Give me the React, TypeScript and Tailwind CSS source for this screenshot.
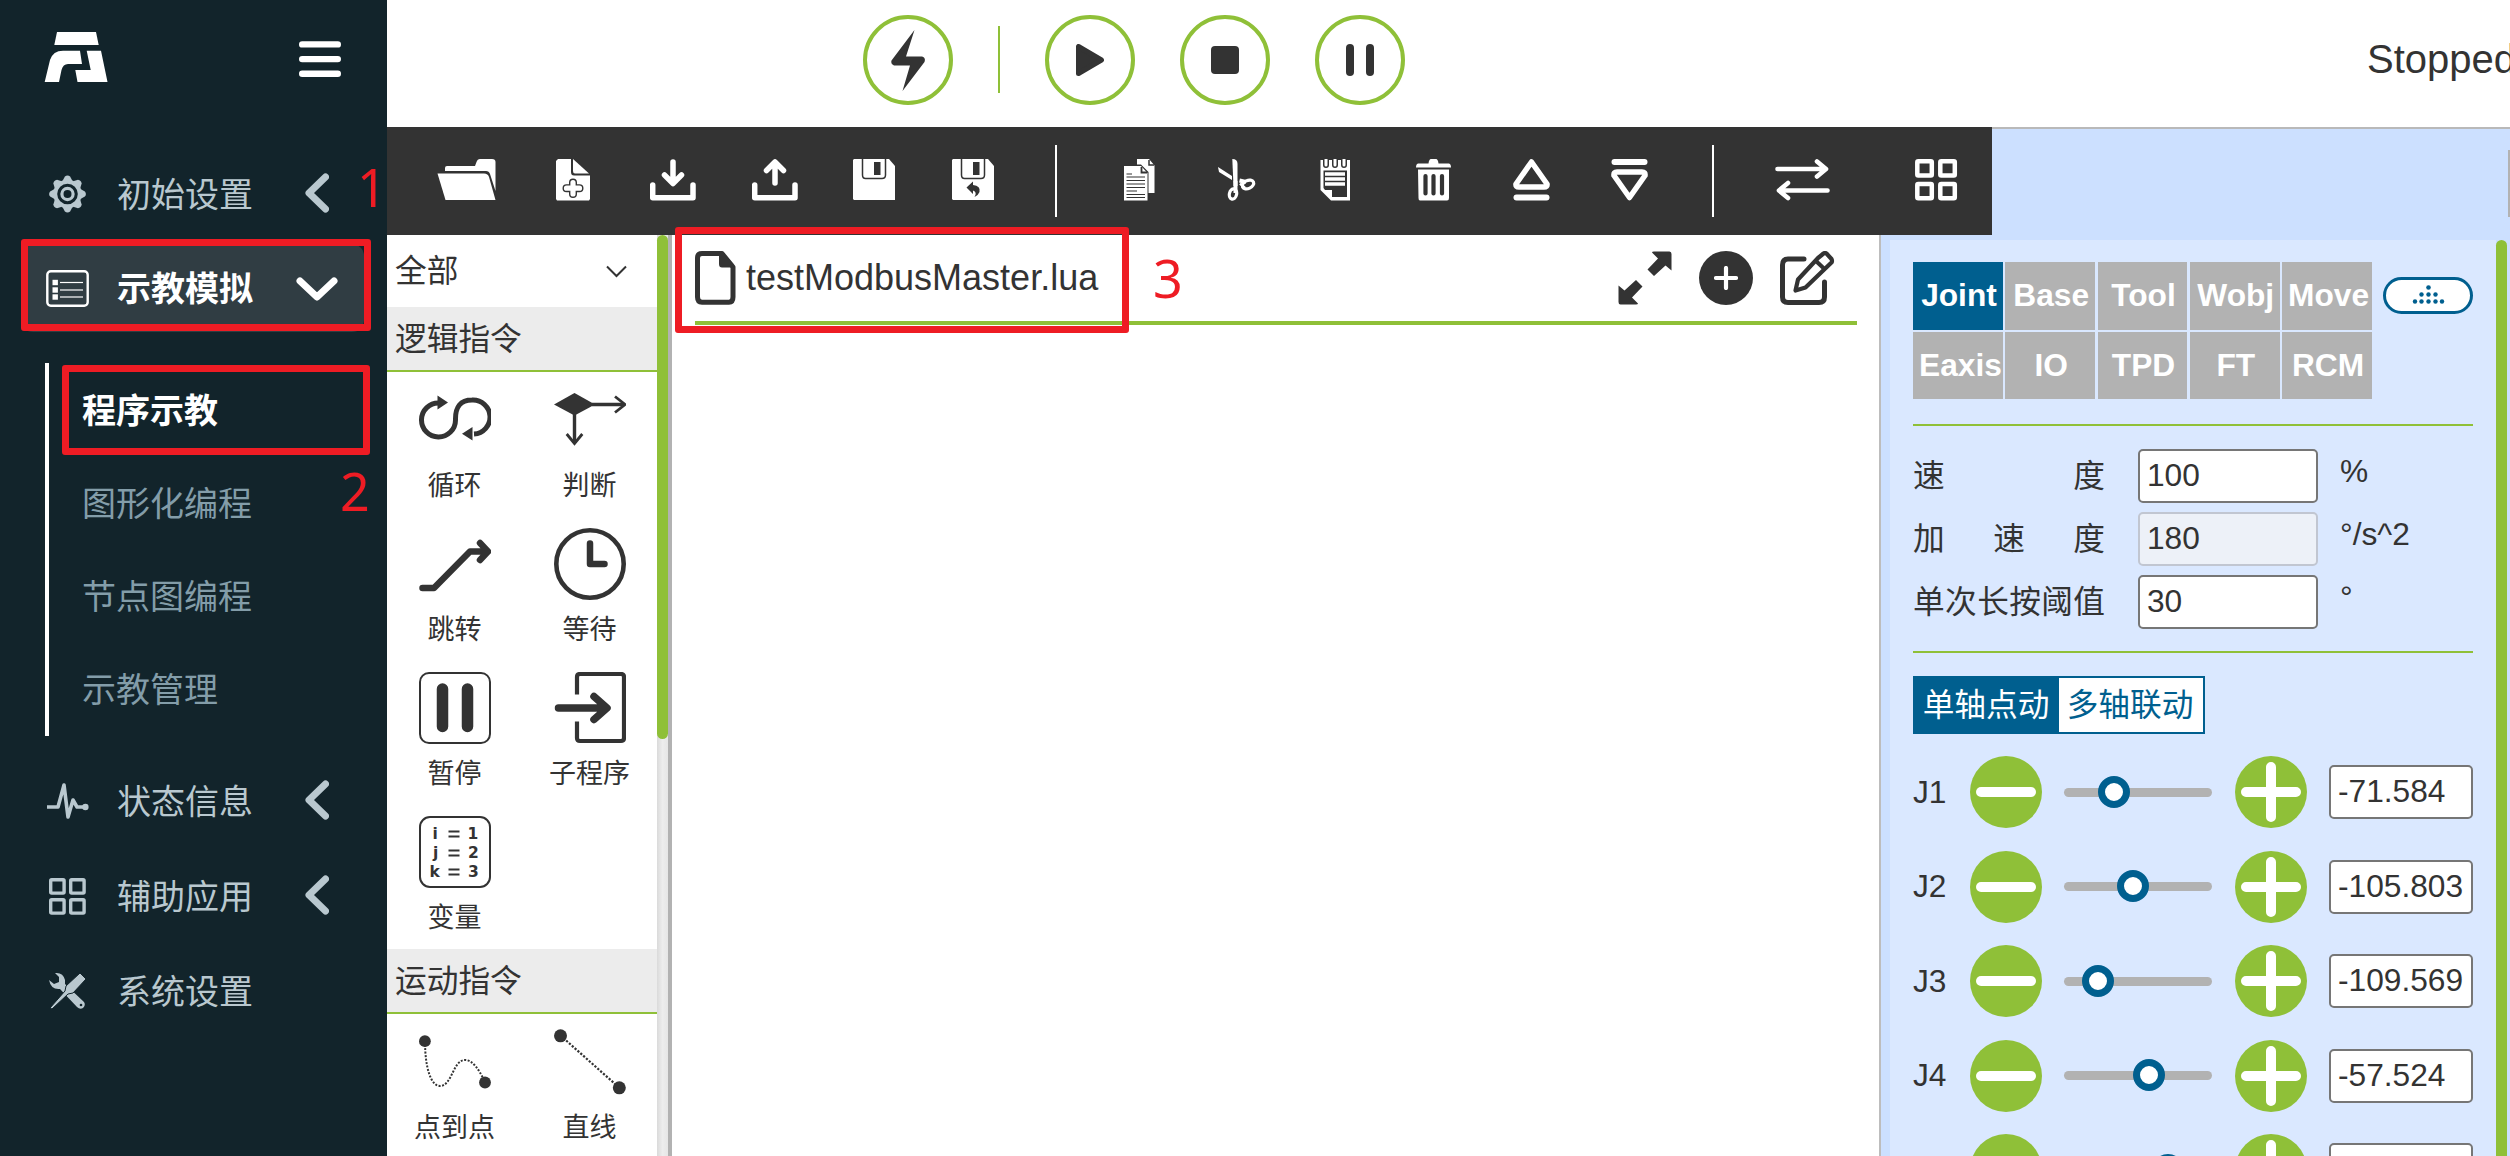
import React from "react";

type Kids = { children: React.ReactNode };

function Svg({ w, h, className = "", children }: { w: number; h: number; className?: string } & Kids) {
  return (
    <svg width={w} height={h} viewBox={`0 0 ${w} ${h}`} fill="none" className={`block shrink-0 ${className}`}>
      {children}
    </svg>
  );
}

/* ---------- Sidebar ---------- */

const Logo = () => (
  <Svg w={64} h={50} className="text-white">
    <g fill="currentColor">
      <path d="M13 0H52L54.7 13H10.3Z" />
      <path d="M.7 50L6 28Q9 18.7 19 18.7H36L38 32H24Q19 32 17.5 38L15 50Z" />
      <path d="M42.7 18.7H57L63.5 50H33.5L31.3 38H46.7Z" />
    </g>
  </Svg>
);

const GearIcon = () => (
  <Svg w={43} h={38}>
    <g transform="translate(21.5 19)">
      {[0, 45, 90, 135, 180, 225, 270, 315].map((a) => (
        <path key={a} transform={`rotate(${a})`} d="M-5 -13L-2.6 -17.4Q0 -19.4 2.6 -17.4L5 -13Z" fill="currentColor" />
      ))}
      <circle r="12.3" stroke="currentColor" strokeWidth="4" />
      <circle r="5.6" stroke="currentColor" strokeWidth="3.2" />
    </g>
  </Svg>
);

const ListIcon = () => (
  <Svg w={43} h={37}>
    <rect x="1.3" y="1.3" width="40.4" height="34.4" rx="3.5" stroke="currentColor" strokeWidth="2.4" />
    {[12.5, 20, 27].map((y) => (
      <g key={y}>
        <rect x="6.5" y={y - 2.7} width="5.4" height="5.4" fill="currentColor" />
        <path d={`M14 ${y}H37`} stroke="currentColor" strokeWidth="1.2" />
      </g>
    ))}
  </Svg>
);

const PulseIcon = () => (
  <Svg w={43} h={38}>
    <path d="M1 25H12L18 3L22 35L27 18L31 25H38" stroke="currentColor" strokeWidth="3.6" strokeLinejoin="round" />
    <circle cx="39.4" cy="25" r="3.2" fill="currentColor" />
  </Svg>
);

const GridIcon = () => (
  <Svg w={43} h={37}>
    <g stroke="currentColor" strokeWidth="3.4">
      <rect x="4.7" y="1.7" width="13.4" height="13.4" rx="1" />
      <rect x="24.7" y="1.7" width="13.4" height="13.4" rx="1" />
      <rect x="4.7" y="21.7" width="13.4" height="13.4" rx="1" />
      <rect x="24.7" y="21.7" width="13.4" height="13.4" rx="1" />
    </g>
  </Svg>
);

const ToolsIcon = () => (
  <Svg w={43} h={38}>
    <g fill="currentColor">
      <path d="M9 1Q17 0 19 8L19 12L38 30Q40 33 37 36Q34 38 31 35L14 17Q5 18 3 8L8 12L13 10L13 5Z" />
      <path d="M34 1L40 7L27 21L22 22L6 37L4 36L19 19L20 14Z" stroke="#12242b" strokeWidth="1" />
    </g>
    <circle cx="35" cy="33" r="1.3" fill="#12242b" />
  </Svg>
);

const ChevronLeft = () => (
  <Svg w={24} h={40} className="-mt-[2px] ml-[53px]">
    <path d="M20.5 4L4 20L20.5 36" stroke="currentColor" strokeWidth="7" strokeLinecap="round" strokeLinejoin="round" />
  </Svg>
);

const ChevronDown = () => (
  <Svg w={42} h={24} className="mt-[2px] ml-[44px]">
    <path d="M4 4L21 20L38 4" stroke="currentColor" strokeWidth="7" strokeLinecap="round" strokeLinejoin="round" />
  </Svg>
);

function NavRow({ icon, label, arrow, active }: { icon: React.ReactNode; label: string; arrow?: React.ReactNode; active?: boolean }) {
  return (
    <div
      className={`ml-[21px] flex h-[88px] w-[343px] shrink-0 items-center rounded-xl pl-[25px] ${
        active ? "bg-[#303d43] font-bold text-white" : "text-[#b9c8cf]"
      }`}
    >
      {icon}
      <span className="ml-[28px] mt-[2px] w-[135px] whitespace-nowrap text-[34px] leading-[44px]">{label}</span>
      {arrow}
    </div>
  );
}

function Sidebar() {
  return (
    <aside className="flex h-full w-[387px] shrink-0 flex-col bg-[#12242b]">
      <div className="flex h-[150px] shrink-0 items-start pl-[44px] pt-8">
        <Logo />
        <Svg w={42} h={36} className="ml-[191px] mt-[9px]">
          <path d="M3.2 3.4H38.8M3.2 18.1H38.8M3.2 32.7H38.8" stroke="#fff" strokeWidth="6.4" strokeLinecap="round" />
        </Svg>
      </div>
      <NavRow icon={<GearIcon />} label="初始设置" arrow={<ChevronLeft />} />
      <div className="h-[6px] shrink-0" />
      <NavRow icon={<ListIcon />} label="示教模拟" arrow={<ChevronDown />} active />
      <div className="mb-[21px] ml-[45px] mt-[31px] flex h-[373px] shrink-0 flex-col border-l-4 border-white pl-[33px] pt-[1px] text-[34px] leading-[44px] text-[#839da9]">
        <div className="flex h-[93px] items-center font-bold text-white">程序示教</div>
        <div className="flex h-[93px] items-center">图形化编程</div>
        <div className="flex h-[93px] items-center">节点图编程</div>
        <div className="flex h-[93px] items-center">示教管理</div>
      </div>
      <div className="flex flex-col gap-[7px]">
        <NavRow icon={<PulseIcon />} label="状态信息" arrow={<ChevronLeft />} />
        <NavRow icon={<GridIcon />} label="辅助应用" arrow={<ChevronLeft />} />
        <NavRow icon={<ToolsIcon />} label="系统设置" />
      </div>
    </aside>
  );
}

/* ---------- Header ---------- */

function RoundButton({ className = "", children }: { className?: string } & Kids) {
  return (
    <div className={`flex size-[90px] shrink-0 items-center justify-center rounded-full border-4 border-[#8fc038] ${className}`}>
      {children}
    </div>
  );
}

function Header() {
  return (
    <header className="flex h-[127px] shrink-0 items-start overflow-hidden bg-white pl-[476px] pt-[15px]">
      <RoundButton>
        <Svg w={34} h={61}>
          <path d="M23.5 0L15 26.5H31Q35 27.5 33.5 32L11.5 61L19 35.5H3Q-.5 34.500 .5 30.500Z" fill="#333" />
        </Svg>
      </RoundButton>
      <div className="ml-[45px] mt-[11px] h-[67px] w-[2px] shrink-0 bg-[#8fc038]" />
      <RoundButton className="ml-[45px]">
        <Svg w={28} h={32}>
          <path d="M2.500 2.500V29.500L25.500 16Z" fill="#333" stroke="#333" strokeWidth="5" strokeLinejoin="round" />
        </Svg>
      </RoundButton>
      <RoundButton className="ml-[45px]">
        <div className="size-[28px] rounded-[4px] bg-[#333]" />
      </RoundButton>
      <RoundButton className="ml-[45px] gap-3">
        <div className="h-8 w-[8px] rounded-full bg-[#333]" />
        <div className="h-8 w-[8px] rounded-full bg-[#333]" />
      </RoundButton>
      <span className="ml-[962px] mt-[21px] shrink-0 text-[40px] leading-[46px] text-[#333]">Stopped</span>
    </header>
  );
}

/* ---------- Toolbar ---------- */

const Floppy = ({ undo }: { undo?: boolean }) => (
  <>
    <path d="M1 0H36L42 7V41H1L0 40V1Z" fill="#fff" />
    <path d="M9.500 0V16Q9.500 19.500 12.500 19.500H29Q32.500 19.500 32.500 16V0" stroke="#333" strokeWidth="1.500" />
    <rect x="21" y="3" width="6.500" height="13" fill="#333" />
    {undo && <path d="M14.500 28.500L21 22.500V26Q29 27 27.500 33Q26.500 36 22.500 38Q25.500 33 21 31.500V35Z" fill="#333" />}
  </>
);

function Toolbar() {
  return (
    <div className="flex h-[108px] w-[1605px] shrink-0 items-center bg-[#333] pb-[2px] pl-[50px]">
      <Svg w={59} h={42}>
        <path d="M8 12V9Q8 7 10 7H38L39.500 3Q40.500 0 43 0H55Q58.500 0 58.500 3V32L53 15Q52 12 49 12Z" fill="#fff" />
        <path d="M.5 14.500H47Q51 14.500 52 18L58.500 41H8.500Z" fill="#fff" />
      </Svg>
      <Svg w={34} h={42} className="ml-[60px]">
        <path d="M2 0H15V13Q15 16.500 18 16.500H34V40L33 41.500H1L0 40V2Z" fill="#fff" />
        <path d="M17 0L33 14.500H19Q17 14.500 17 12Z" fill="#fff" />
        <path d="M17 23.500V35M10.500 29.200H23.500" stroke="#333" strokeWidth="8" strokeLinecap="round" />
        <path d="M17 23.500V35M10.500 29.200H23.500" stroke="#fff" strokeWidth="5.200" strokeLinecap="round" />
      </Svg>
      <Svg w={46} h={42} className="ml-[60px]">
        <path d="M2.700 26V38.700H43V26" stroke="#fff" strokeWidth="5.500" strokeLinecap="round" strokeLinejoin="round" />
        <path d="M23 3V23M14.500 16L23 24.500L31.500 16" stroke="#fff" strokeWidth="5.500" strokeLinecap="round" strokeLinejoin="round" />
      </Svg>
      <Svg w={46} h={42} className="ml-[56px]">
        <path d="M2.700 26V38.700H43V26" stroke="#fff" strokeWidth="5.500" strokeLinecap="round" strokeLinejoin="round" />
        <path d="M23 24V3.500M14.500 11.500L23 3L31.500 11.500" stroke="#fff" strokeWidth="5.500" strokeLinecap="round" strokeLinejoin="round" />
      </Svg>
      <Svg w={42} h={42} className="ml-[55px]">
        <Floppy />
      </Svg>
      <Svg w={42} h={42} className="ml-[57px]">
        <Floppy undo />
      </Svg>
      <div className="ml-[61px] mt-[2px] h-[72px] w-[2px] bg-white" />
      <Svg w={31} h={42} className="ml-[67px]">
        <path d="M13 0H25L30.500 6.500V34H24.500V13L17 5.500H13Z" fill="#fff" />
        <path d="M25 1V6H30" stroke="#333" strokeWidth="1.500" />
        <path d="M0 7H17L23.500 14V41.500H0Z" fill="#fff" />
        <path d="M17.500 8V13.500H23" stroke="#333" strokeWidth="1.800" />
        <path d="M2.500 15H8M2.500 18H21M2.500 21.500H21M2.500 25H21M2.500 28.500H21M2.500 32H13M2.500 35.500H21M2.500 38.500H21" stroke="#333" strokeWidth="1.200" />
      </Svg>
      <Svg w={39} h={42} className="ml-[63px]">
        <path d="M14.300 0Q19.500 0 19.500 5V27H15.500Z" fill="#fff" />
        <path d="M0 8L14 17V21L1 13Z" fill="#fff" />
        <path d="M21.500 21.500L28 23" stroke="#fff" strokeWidth="4" />
        <ellipse cx="30" cy="25.500" rx="6" ry="4" transform="rotate(-25 30 25.500)" stroke="#fff" strokeWidth="3.200" />
        <path d="M22 24.500L27 29" stroke="#fff" strokeWidth="2.500" />
        <ellipse cx="15" cy="35" rx="3.600" ry="5.200" transform="rotate(12 15 35)" stroke="#fff" strokeWidth="3.200" />
        <path d="M17.500 22V34" stroke="#fff" strokeWidth="4" />
      </Svg>
      <Svg w={31} h={42} className="ml-[63px]">
        <path d="M.5 1H30V41.500H11L.5 31Z" fill="#fff" />
        <path d="M3.500 11.500H27V38H12V31H5L3.500 29Z" fill="#333" />
        <path d="M5 15H25M5 20H25M5 25H25" stroke="#fff" strokeWidth="3.400" />
        <path d="M6 0V6M15 0V6M24 0V6" stroke="#333" strokeWidth="6" strokeLinecap="round" />
        <path d="M6 0V6M15 0V6M24 0V6" stroke="#fff" strokeWidth="3" strokeLinecap="round" />
      </Svg>
      <Svg w={35} h={42} className="ml-[65px]">
        <path d="M2 4.500H12.500Q13 0 15 0H20Q22 0 22.500 4.500H33Q35 5 35 8.500H0Q0 5 2 4.500Z" fill="#fff" />
        <path d="M2 10.500H33V39Q33 41.500 31 41.500H4Q2.500 41.500 2.500 39Z" fill="#fff" />
        <path d="M9.500 17V34.500M17.500 17V34.500M26 17V34.500" stroke="#333" strokeWidth="4.200" strokeLinecap="round" />
      </Svg>
      <Svg w={37} h={42} className="ml-[62px]">
        <path d="M18.500 3L34 25Q34.500 28 31 28H6Q2.500 28 3 25Z" stroke="#fff" strokeWidth="5.500" strokeLinejoin="round" />
        <path d="M3.500 38.500H33.500" stroke="#fff" strokeWidth="6" strokeLinecap="round" />
      </Svg>
      <Svg w={37} h={42} className="ml-[61px]">
        <path d="M18.500 38.500L34 16.500Q34.500 13 31 13H6Q2.500 13 3 16.500Z" stroke="#fff" strokeWidth="5.500" strokeLinejoin="round" />
        <path d="M3.500 3H33.500" stroke="#fff" strokeWidth="6" strokeLinecap="round" />
      </Svg>
      <div className="ml-[64px] mt-[2px] h-[72px] w-[2px] bg-white" />
      <Svg w={55} h={42} className="ml-[61px]">
        <path d="M2.500 10H50M42 2.500L51 10L42 17.500" stroke="#fff" strokeWidth="4.600" strokeLinecap="round" strokeLinejoin="round" />
        <path d="M52.500 31.500H5M13 24L4 31.500L13 39" stroke="#fff" strokeWidth="4.600" strokeLinecap="round" strokeLinejoin="round" />
      </Svg>
      <Svg w={43} h={42} className="ml-[85px]">
        <g stroke="#fff" strokeWidth="4.500">
          <rect x="2.300" y="2.300" width="14.500" height="14.200" rx="1" />
          <rect x="25.300" y="2.300" width="14.500" height="14.200" rx="1" />
          <rect x="2.300" y="25" width="14.500" height="14.200" rx="1" />
          <rect x="25.300" y="25" width="14.500" height="14.200" rx="1" />
        </g>
      </Svg>
    </div>
  );
}

/* ---------- Command palette ---------- */

const LoopIcon = () => (
  <Svg w={72} h={72}>
    <path d="M20 19A17 17 0 1 0 36.500 36Q36 16 53 16A16.700 16.700 0 0 1 55 50" stroke="#333" strokeWidth="5" />
    <path d="M18.500 11.500L29 18.500L18.500 25.500ZM53.500 43L43 49.700L53.500 56.500Z" fill="#333" />
  </Svg>
);

const BranchIcon = () => (
  <Svg w={72} h={72}>
    <path d="M0 20.500L20.500 9L41 20.500L20.500 31.500Z" fill="#333" />
    <path d="M38 20.500H69M20.500 29V58" stroke="#333" strokeWidth="3.400" />
    <path d="M61 12.500L71 20.500L61 28.500M12.700 50L20.500 59.500L28.300 50" stroke="#333" strokeWidth="2.800" />
  </Svg>
);

const JumpIcon = () => (
  <Svg w={72} h={72}>
    <path d="M3.500 60H15L51 23.500H67M61 15L69 23.500L61 32" stroke="#333" strokeWidth="6.500" strokeLinecap="round" strokeLinejoin="round" />
  </Svg>
);

const ClockIcon = () => (
  <Svg w={72} h={72}>
    <circle cx="36" cy="36" r="33.700" stroke="#333" strokeWidth="4.600" />
    <path d="M36 15.500V36H50.500" stroke="#333" strokeWidth="6.500" strokeLinecap="round" strokeLinejoin="round" />
  </Svg>
);

const PauseIcon = () => (
  <Svg w={72} h={72}>
    <rect x="1" y="1" width="70" height="70" rx="9" stroke="#333" strokeWidth="2" />
    <path d="M23.500 17V54.500M48.500 17V54.500" stroke="#333" strokeWidth="11.500" strokeLinecap="round" />
  </Svg>
);

const SubroutineIcon = () => (
  <Svg w={72} h={72}>
    <path d="M23 22.500V5Q23 2 26 2H67Q70 2 70 5V66Q70 69 67 69H26Q23 69 23 66V49.500" stroke="#333" strokeWidth="4.200" />
    <path d="M4.500 36H52M40 24.500L53 36L40 47.500" stroke="#333" strokeWidth="7.500" strokeLinecap="round" strokeLinejoin="round" />
  </Svg>
);

const VariableIcon = () => (
  <Svg w={72} h={72}>
    <rect x="1" y="1" width="70" height="70" rx="10" stroke="#333" strokeWidth="2" />
    <g fill="#333" fontFamily="'DejaVu Sans', sans-serif" fontWeight="700" fontSize="15.5">
      <text x="13.500" y="22.700">i</text>
      <text x="14" y="41.700">j</text>
      <text x="10.500" y="61">k</text>
      <text x="48.500" y="22.700">1</text>
      <text x="49" y="41.700">2</text>
      <text x="49" y="61">3</text>
    </g>
    <path d="M29.500 15.500H40.500M29.500 20.500H40.500M29.500 34.500H40.500M29.500 39.500H40.500M29.500 53.500H40.500M29.500 58.500H40.500" stroke="#333" strokeWidth="1.800" />
  </Svg>
);

const PtpIcon = () => (
  <Svg w={72} h={72}>
    <path d="M6 15C6 42 12 60 21 60C33 60 34 34 46 34C54 34 60 44 65 54" stroke="#333" strokeWidth="2" strokeDasharray="2 1.500" />
    <circle cx="5.900" cy="15.200" r="5.900" fill="#333" />
    <circle cx="66" cy="56.500" r="5.900" fill="#333" />
  </Svg>
);

const LineIcon = () => (
  <Svg w={72} h={72}>
    <path d="M6.500 9.500L65 61.500" stroke="#333" strokeWidth="2.200" strokeDasharray="2.200 1.600" />
    <circle cx="6.500" cy="9.800" r="6.500" fill="#333" />
    <circle cx="65.300" cy="61.800" r="6.500" fill="#333" />
  </Svg>
);

function Command({ icon, label }: { icon: React.ReactNode; label: string }) {
  return (
    <div className="flex h-[144px] w-[135px] flex-col items-center pt-3">
      {icon}
      <span className="mt-3 text-[27px] leading-[36px]">{label}</span>
    </div>
  );
}

function GroupTitle({ children }: Kids) {
  return (
    <div className="flex h-[65px] shrink-0 items-center border-b-2 border-[#8fc038] bg-[#ececec] pl-[8px] text-[31.700px] leading-[40px]">
      {children}
    </div>
  );
}

function Palette() {
  return (
    <div className="flex w-[285px] shrink-0 border-r-4 border-[#b2b2b2] text-[#333]">
      <div className="flex h-full w-[270px] flex-col overflow-hidden bg-white">
        <div className="flex h-[72px] shrink-0 items-center justify-between pl-[8px] pr-[30px] text-[31.700px] leading-[40px]">
          <span>全部</span>
          <Svg w={21} h={13}>
            <path d="M1 1.500L10.500 11L20 1.500" stroke="#333" strokeWidth="2" />
          </Svg>
        </div>
        <GroupTitle>逻辑指令</GroupTitle>
        <div className="flex h-[577px] shrink-0 flex-wrap content-start">
          <Command icon={<LoopIcon />} label="循环" />
          <Command icon={<BranchIcon />} label="判断" />
          <Command icon={<JumpIcon />} label="跳转" />
          <Command icon={<ClockIcon />} label="等待" />
          <Command icon={<PauseIcon />} label="暂停" />
          <Command icon={<SubroutineIcon />} label="子程序" />
          <Command icon={<VariableIcon />} label="变量" />
        </div>
        <GroupTitle>运动指令</GroupTitle>
        <div className="flex shrink-0 flex-wrap">
          <Command icon={<PtpIcon />} label="点到点" />
          <Command icon={<LineIcon />} label="直线" />
        </div>
      </div>
      <div className="w-[11px] bg-linear-to-r from-[#dadada] via-[#ededed] to-[#e6e6e6]">
        <div className="h-[504px] rounded-full bg-[#8fc038]" />
      </div>
    </div>
  );
}

/* ---------- Editor ---------- */

function Editor() {
  return (
    <main className="flex min-w-0 flex-1 flex-col bg-white pl-[23px] pr-[22px]">
      <div className="flex h-[90px] shrink-0 items-start border-b-4 border-[#8fc038] pt-4 text-[#333]">
        <Svg w={41} h={54}>
          <path d="M7 2.500H27L38 16V46Q38 51.200 34 51.200H7Q2.500 51.200 2.500 46V7Q2.500 2.500 7 2.500Z" stroke="#333" strokeWidth="5" strokeLinejoin="round" />
          <path d="M24 3H29L38.500 13V16.500H27Q24 16.500 24 13Z" fill="#333" />
        </Svg>
        <span className="ml-[10px] mt-[6px] w-[352px] whitespace-nowrap text-[36px] leading-[42px]">testModbusMaster.lua</span>
        <Svg w={54} h={54} className="ml-auto">
          <path d="M34 1.500Q34 .5 36 .5H51.500Q53.500 .5 53.500 3V19.500L47.500 14.500L36 25L29.500 18.500L40 7.500Z" fill="#333" />
          <path d="M20 52.500Q20 53.500 18 53.500H2.500Q.5 53.500 .5 51V34.500L6.500 39.500L18 29L24.500 35.500L14 46.500Z" fill="#333" />
        </Svg>
        <div className="ml-[27px] flex size-[54px] items-center justify-center rounded-full bg-[#333]">
          <Svg w={24} h={24}>
            <path d="M12 2V22M2 12H22" stroke="#fff" strokeWidth="4.200" strokeLinecap="round" />
          </Svg>
        </div>
        <Svg w={55} h={54} className="ml-[27px] mr-[22px]">
          <path d="M24 8H8Q2.500 8 2.500 14V46Q2.500 51.500 8 51.500H39Q44.500 51.500 44.500 46V31" stroke="#333" strokeWidth="5" strokeLinecap="round" />
          <path d="M38 7L43.500 2.500Q45 1.500 46.500 2.500L51.500 8Q52.500 10 51.500 11.500L25.500 36.500L15.500 39.500L18 28.500Z" stroke="#333" strokeWidth="4.200" strokeLinejoin="round" />
          <path d="M36 10L45 18.500" stroke="#333" strokeWidth="4" />
        </Svg>
      </div>
    </main>
  );
}

/* ---------- Joint panel ---------- */

const TABS = ["Joint", "Base", "Tool", "Wobj", "Move", "Eaxis", "IO", "TPD", "FT", "RCM"];

const JOINTS = [
  { name: "J1", value: "-71.584", thumb: 50 },
  { name: "J2", value: "-105.803", thumb: 69 },
  { name: "J3", value: "-109.569", thumb: 34 },
  { name: "J4", value: "-57.524", thumb: 85 },
  { name: "J5", value: "90.125", thumb: 103.5 },
];

function Param({ label, value, unit, disabled }: { label: string; value: string; unit: string; disabled?: boolean }) {
  return (
    <div className="flex h-[54px] items-center">
      <div className="-mt-[1px] flex w-[192px] justify-between leading-[44px]">
        {label.split("").map((c, i) => (
          <span key={i}>{c}</span>
        ))}
      </div>
      <div
        className={`ml-[33px] flex h-[54px] w-[180px] items-center rounded-[5px] border-2 pb-[2px] pl-[7px] ${
          disabled ? "border-[#c1c6d1] bg-[#edf1f8]" : "border-[#767676] bg-white"
        }`}
      >
        {value}
      </div>
      <span className="-mt-[11px] ml-[22px]">{unit}</span>
    </div>
  );
}

function JointRow({ name, value, thumb }: { name: string; value: string; thumb: number }) {
  return (
    <div className="flex h-[72px] shrink-0 items-center">
      <span className="-mt-[1px] w-[57px]">{name}</span>
      <div className="flex size-[72px] items-center justify-center rounded-full bg-[#8fc038]">
        <div className="h-[10px] w-[60px] rounded-full bg-white" />
      </div>
      <div className="relative ml-[22px] h-[9px] w-[148px] rounded-full bg-[#b2b2b2]">
        <div
          className="absolute -top-[12px] size-[32px] -translate-x-1/2 rounded-full border-[7px] border-[#005f8f] bg-white"
          style={{ left: thumb }}
        />
      </div>
      <div className="ml-[23px] flex size-[72px] items-center justify-center rounded-full bg-[#8fc038]">
        <Svg w={60} h={60}>
          <path d="M5 30H55M30 5V55" stroke="#fff" strokeWidth="10" strokeLinecap="round" />
        </Svg>
      </div>
      <div className="ml-[22px] flex h-[54px] w-[144px] items-center rounded-[5px] border-2 border-[#767676] bg-white pb-[2px] pl-[7px]">
        {value}
      </div>
    </div>
  );
}

function ControlPanel() {
  return (
    <aside className="flex h-[916px] w-[606px] shrink-0 flex-col overflow-hidden bg-[#dae8ff] pl-[23px] pr-[23px] pt-[22px] text-[31.700px] leading-[38px] text-[#333]">
      <div className="flex shrink-0 items-start">
        <div className="grid w-[459px] grid-cols-5 gap-x-[2.300px] gap-y-[2px] font-bold text-white">
          {TABS.map((t) => (
            <div key={t} className={`h-[67.500px] whitespace-nowrap pl-[6px] pr-[4px] pt-[14px] text-center ${t === "Joint" ? "bg-[#005f8f]" : "bg-[#b2b2b2]"}`}>
              {t}
            </div>
          ))}
        </div>
        <div className="ml-[11px] mt-[15px] flex h-[37px] w-[90px] items-center justify-center rounded-full border-[3px] border-[#005f8f] bg-white">
          <Svg w={33} h={19} className="-mt-[2px]">
            <g fill="#005f8f">
              <circle cx="16.500" cy="2.500" r="2.300" />
              <circle cx="9.500" cy="9.500" r="2.200" />
              <circle cx="16.500" cy="9.500" r="2.200" />
              <circle cx="23.500" cy="9.500" r="2.200" />
              <circle cx="3" cy="16.500" r="2.200" />
              <circle cx="9.500" cy="16.500" r="2.200" />
              <circle cx="16.500" cy="16.500" r="2.200" />
              <circle cx="23.500" cy="16.500" r="2.200" />
              <circle cx="30" cy="16.500" r="2.200" />
            </g>
          </Svg>
        </div>
      </div>
      <div className="mt-[25px] h-[2px] shrink-0 bg-[#8fc038]" />
      <div className="mt-[23px] flex shrink-0 flex-col gap-[9px]">
        <Param label="速度" value="100" unit="%" />
        <Param label="加速度" value="180" unit="°/s^2" disabled />
        <Param label="单次长按阈值" value="30" unit="°" />
      </div>
      <div className="mt-[22px] h-[2px] shrink-0 bg-[#8fc038]" />
      <div className="mt-[23px] flex h-[58px] w-[292px] shrink-0 border-2 border-[#005f8f] bg-white">
        <div className="flex w-[144px] items-center justify-center bg-[#005f8f] pr-[2px] text-white">单轴点动</div>
        <div className="flex flex-1 items-center justify-center pr-[2px] text-[#005f8f]">多轴联动</div>
      </div>
      <div className="mt-[22px] flex flex-col gap-[22.500px]">
        {JOINTS.map((j) => (
          <JointRow key={j.name} {...j} />
        ))}
      </div>
    </aside>
  );
}

/* ---------- Annotations ---------- */

function Annotations() {
  return (
    <div className="pointer-events-none absolute inset-0 font-['Noto_Sans',sans-serif] text-[52px] leading-none text-[#ee1c24]">
      <div className="absolute left-[21px] top-[239px] h-[92px] w-[350px] rounded-[3px] border-[7px] border-[#ee1c24]" />
      <div className="absolute left-[62px] top-[365px] h-[90px] w-[308px] rounded-[3px] border-[7px] border-[#ee1c24]" />
      <div className="absolute left-[675px] top-[227px] h-[106px] w-[454px] rounded-[3px] border-[7px] border-[#ee1c24]" />
      <span className="absolute left-[357px] top-[161px]">1</span>
      <span className="absolute left-[340px] top-[465px]">2</span>
      <span className="absolute left-[1153px] top-[252px]">3</span>
    </div>
  );
}

export default function App() {
  return (
    <div className="relative flex h-[1156px] w-[2510px] overflow-hidden bg-white font-['Liberation_Sans','Noto_Sans_CJK_SC',sans-serif]">
      <Sidebar />
      <div className="flex min-w-0 flex-1 flex-col">
        <Header />
        <div className="flex min-h-0 flex-1">
          <div className="flex w-[1605px] shrink-0 flex-col">
            <Toolbar />
            <div className="flex min-h-0 flex-1">
              <Palette />
              <Editor />
              <div className="w-[113px] shrink-0 border-l-2 border-[#bdbdbd] bg-[#cce0ff]" />
            </div>
          </div>
          <div className="flex flex-1 flex-col border-t-2 border-[#b9b9b9] bg-[#cce0ff]">
            <div className="flex h-[111px] shrink-0 justify-end pt-[21px]">
              <div className="h-[67px] w-[2px] bg-[#b2b2b2]" />
            </div>
            <div className="-ml-[102px] flex h-[916px]">
              <ControlPanel />
              <div className="h-[1200px] w-[11px] shrink-0 rounded-full bg-[#8fc038]" />
            </div>
          </div>
        </div>
      </div>
      <Annotations />
    </div>
  );
}
